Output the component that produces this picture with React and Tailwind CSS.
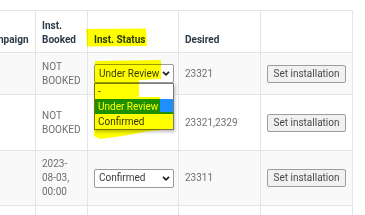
import { ChevronDown } from "lucide-react";

const grid = "grid grid-cols-[64px_52px_91px_82px_92px]";
const cell = "border-r border-b border-[#e4e4e4] px-[6px]";

const rows = [
  { booked: ["NOT", "BOOKED"], status: "Under Review", desired: "23321", h: "h-[42px]", bg: "bg-[#f9f9f9]", open: true },
  { booked: ["NOT", "BOOKED"], status: null, desired: "23321,2329", h: "h-[56px]", bg: "bg-white" },
  { booked: ["2023-", "08-03,", "00:00"], status: "Confirmed", desired: "23311", h: "h-[55px]", bg: "bg-[#f9f9f9]" },
];

function Chevron() {
  return (
    <svg width="8" height="5" viewBox="0 0 8 5" className="shrink-0">
      <polyline points="1,0.8 4,3.8 7,0.8" fill="none" stroke="#1f1f1f" strokeWidth="1.7" />
    </svg>
  );
}

function Select({ value, open }) {
  return (
    <div className="relative">
      <div className="w-[80px] h-[19px] border border-[#9a9a9a] rounded-[2px] bg-white flex items-center justify-between pl-[4px] pr-[3px] text-[#3a3a3a]">
        <span>{value}</span>
        <Chevron />
      </div>
      {open && (
        <div className="absolute left-0 top-[19px] w-[80px] border border-[#7a7a7a] bg-white shadow-[1px_2px_3px_rgba(0,0,0,0.25)] z-10 text-[#333]">
          <div className="h-[15px] pl-[3px] leading-[15px]">-</div>
          <div className="h-[15px] pl-[3px] leading-[15px] bg-[#1e90ff] text-white">Under Review</div>
          <div className="h-[15px] pl-[3px] leading-[15px]">Confirmed</div>
        </div>
      )}
    </div>
  );
}

function Button() {
  return (
    <button className="w-[80px] h-[18px] border border-[#9d9d9d] rounded-[2px] bg-[#f1f1f1] text-[#4a4a4a] leading-[16px]">
      Set installation
    </button>
  );
}

export default function App() {
  return (
    <div className="relative w-[365px] h-[215px] overflow-hidden bg-white text-[10px] leading-[14px] font-['Roboto',sans-serif]">
      <div className="mt-[10px] -ml-[28px] w-[381px] border-t border-[#e4e4e4]">
        <div className={`${grid} h-[42px] bg-white font-bold text-[#2a3a48]`}>
          <div className={`${cell} pl-[11px] flex items-end pb-[5px]`}>Campaign</div>
          <div className={`${cell} flex items-end pb-[5px]`}>
            <div>Inst.<br />Booked</div>
          </div>
          <div className={`${cell} flex items-end pb-[5px]`}>Inst. Status</div>
          <div className={`${cell} flex items-end pb-[5px]`}>Desired</div>
          <div className={cell}></div>
        </div>
        {rows.map((r, i) => (
          <div key={i} className={`${grid} ${r.h} ${r.bg} text-[#6e6e6e]`}>
            <div className={cell}></div>
            <div className={`${cell} flex items-center`}>
              <div>{r.booked.map((l, j) => <div key={j}>{l}</div>)}</div>
            </div>
            <div className={`${cell} flex items-center`}>
              {r.status && <Select value={r.status} open={r.open} />}
            </div>
            <div className={`${cell} flex items-center`}>{r.desired}</div>
            <div className={`${cell} flex items-center`}>
              <Button />
            </div>
          </div>
        ))}
        <div className={`${grid} h-[20px] bg-white`}>
          <div className={cell}></div>
          <div className={cell}></div>
          <div className={cell}></div>
          <div className={cell}></div>
          <div className={cell}></div>
        </div>
      </div>
      <svg className="absolute inset-0 pointer-events-none mix-blend-multiply z-20" width="365" height="215">
        <path d="M86,29 L146,28.5 L147,46 L87,46.5 Z" fill="#ffff00" />
        <path d="M95,61 L161,60 L161,79 L139,80 L139,97 L160,97 L160,112 L173,112 L173,129 L150,131 L122,136 L100,139 L94,136 L94,80 Z" fill="#ffff00" />
      </svg>
    </div>
  );
}
